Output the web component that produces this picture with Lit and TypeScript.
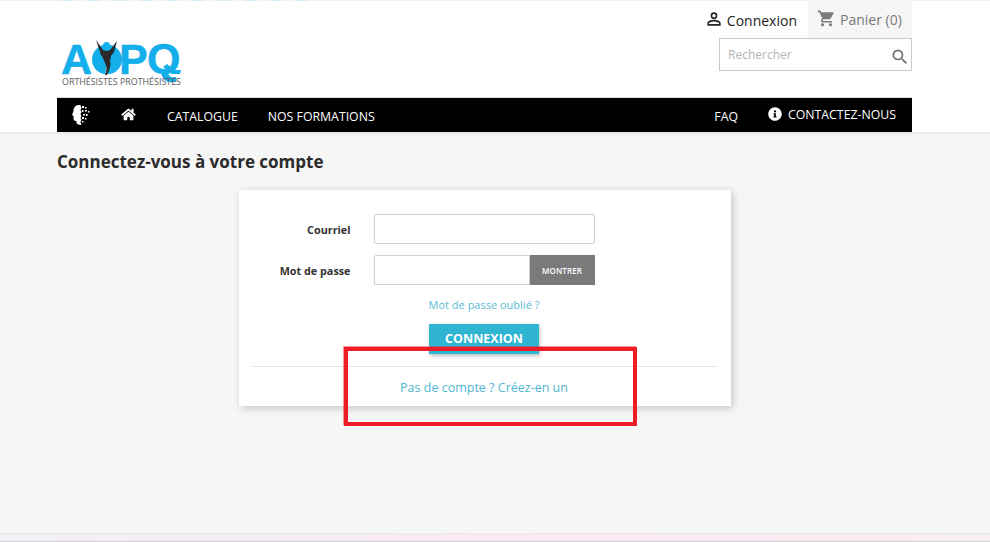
import { LitElement, html, css, svg } from "lit";
import { customElement } from "lit/decorators.js";

const personIcon = svg`<path d="M12 5.9a2.1 2.1 0 1 1 0 4.2 2.1 2.1 0 0 1 0-4.2m0 9c2.97 0 6.1 1.46 6.1 2.1v1.1H5.9V17c0-.64 3.13-2.1 6.1-2.1M12 4a4 4 0 1 0 0 8 4 4 0 0 0 0-8zm0 9c-2.67 0-8 1.34-8 4v3h16v-3c0-2.66-5.33-4-8-4z"/>`;
const cartIcon = svg`<path d="M7 18c-1.1 0-1.99.9-1.99 2S5.9 22 7 22s2-.9 2-2-.9-2-2-2zM1 2v2h2l3.6 7.59-1.35 2.45c-.16.28-.25.61-.25.96 0 1.1.9 2 2 2h12v-2H7.42c-.14 0-.25-.11-.25-.25l.03-.12.9-1.63h7.45c.75 0 1.41-.41 1.75-1.03l3.58-6.49A1 1 0 0 0 20 4H5.21l-.94-2H1zm16 16c-1.1 0-1.99.9-1.99 2s.89 2 1.99 2 2-.9 2-2-.9-2-2-2z"/>`;
const searchIcon = svg`<path d="M15.5 14h-.79l-.28-.27A6.47 6.47 0 0 0 16 9.5 6.5 6.5 0 1 0 9.5 16c1.61 0 3.09-.59 4.23-1.57l.27.28v.79l5 4.99L20.49 19l-4.99-5zm-6 0C7.01 14 5 11.99 5 9.5S7.01 5 9.5 5 14 7.01 14 9.5 11.99 14 9.5 14z"/>`;

@customElement("app-root")
export class AppRoot extends LitElement {
  static styles = css`
    :host {
      display: flex;
      flex-direction: column;
      height: 542px;
      overflow: hidden;
      position: relative;
      background: #f6f6f6;
      font-family: "Open Sans", "Noto Sans", sans-serif;
      color: #232323;
    }
    .header {
      background: #fff;
      height: 132px;
      flex: none;
      box-shadow: 0 1px 3px rgba(0, 0, 0, 0.1);
      position: relative;
    }
    .marks {
      height: 1px;
      background: repeating-linear-gradient(90deg, #d6ecf8 0 12px, #f4f4f4 12px 26px) 62px 0 / 250px 1px no-repeat, #f1f1f1;
    }
    .container {
      width: 855px;
      margin-left: 57px;
    }
    .top {
      display: flex;
      justify-content: space-between;
      height: 96px;
    }
    .logo {
      margin: 39px 0 0 5px;
      width: 120px;
      display: flex;
      flex-direction: column;
    }
    .logo-mark {
      display: block;
      width: 120px;
      height: 35px;
      overflow: visible;
    }
    .logo-letter {
      font-family: "Liberation Sans", Arial, sans-serif;
      font-weight: 700;
      font-size: 43px;
      fill: #14aeea;
      stroke: #14aeea;
      stroke-width: 0.5px;
    }
    .logo-sub {
      font-size: 8.9px;
      line-height: 11px;
      color: #5c5c5c;
      white-space: nowrap;
      margin-top: 1px;
    }
    .right {
      width: 205px;
      display: flex;
      flex-direction: column;
      align-items: flex-end;
    }
    .userbar {
      display: flex;
      height: 37px;
      justify-content: flex-end;
    }
    .login {
      display: flex;
      align-items: center;
      gap: 3px;
      font-size: 14px;
      color: #232323;
      padding: 2px 11px 0 0;
    }
    .login svg {
      width: 20px;
      height: 20px;
      fill: #232323;
      margin-top: -3px;
    }
    .cart {
      width: 104px;
      background: #f6f6f6;
      display: flex;
      align-items: center;
      gap: 4px;
      box-sizing: border-box;
      padding: 0 0 0 9px;
      font-size: 14px;
      color: #7a7a7a;
    }
    .cart svg {
      width: 19px;
      height: 19px;
      fill: #7a7a7a;
      margin-top: -3px;
    }
    .search {
      width: 193px;
      height: 33px;
      box-sizing: border-box;
      border: 1px solid #c9c9c9;
      display: flex;
      align-items: center;
      justify-content: space-between;
      padding: 0 1px 0 8px;
      background: #fff;
      font-size: 12px;
      color: #b5b5b5;
    }
    .search span {
      margin-top: -1px;
    }
    .search svg {
      width: 20px;
      height: 20px;
      fill: #6f6f6f;
      margin-top: 4px;
    }
    .nav {
      height: 35px;
      background: #000;
      border-top: 1px solid #dcdcdc;
      box-sizing: border-box;
      display: flex;
      align-items: center;
      color: #fff;
      font-size: 12.3px;
      padding: 0 16px 0 15px;
    }
    .nav svg {
      display: block;
      fill: #fff;
    }
    .face {
      width: 18px;
      height: 20px;
      margin-right: 31px;
    }
    .home {
      width: 15px;
      height: 13px;
      margin: -2px 31px 0 0;
    }
    .nav-item {
      margin-right: 30px;
      white-space: nowrap;
      padding-top: 2px;
    }
    .spacer {
      flex: 1;
    }
    .faq {
      margin-right: 30px;
    }
    .contact {
      display: flex;
      align-items: center;
      gap: 6px;
      white-space: nowrap;
      margin-top: -2px;
    }
    .info {
      width: 14px;
      height: 14px;
    }
    main {
      flex: 1;
      display: flex;
      flex-direction: column;
    }
    h1 {
      margin: 18px 0 16px;
      font-size: 17px;
      line-height: 24px;
      font-weight: 700;
      color: #2b2b2b;
    }
    .card {
      width: 492px;
      height: 216px;
      margin: 0 auto;
      box-sizing: border-box;
      background: #fff;
      box-shadow: 2px 2px 8px rgba(0, 0, 0, 0.2);
      padding: 24px 13px 0 12px;
      display: flex;
      flex-direction: column;
      align-items: stretch;
    }
    .row {
      display: flex;
      align-items: center;
      height: 30px;
      margin-bottom: 11px;
    }
    .row label {
      width: 100px;
      margin-right: 23px;
      text-align: right;
      font-size: 10.8px;
      font-weight: 700;
      color: #333;
    }
    .input {
      width: 221px;
      height: 30px;
      box-sizing: border-box;
      border: 1px solid #cfcfcf;
      border-radius: 2px;
      background: #fff;
    }
    .pwd {
      width: 156px;
      border-radius: 2px 0 0 2px;
    }
    .show {
      width: 65px;
      height: 30px;
      background: #7a7a7a;
      color: #fff;
      font-size: 8px;
      font-weight: 600;
      display: flex;
      align-items: center;
      justify-content: center;
      letter-spacing: 0.1px;
    }
    .forgot {
      text-align: center;
      font-size: 11px;
      line-height: 14px;
      color: #5bbcd6;
      margin: 2px 0 0;
    }
    .submit {
      align-self: center;
      width: 110px;
      height: 30px;
      box-sizing: border-box;
      padding: 0 0 2px 1px;
      margin: 12px 0 12px -1px;
      background: #2fb5d2;
      color: #fff;
      font-weight: 700;
      font-size: 12.5px;
      display: flex;
      align-items: center;
      justify-content: center;
      box-shadow: 1px 2px 4px rgba(0, 0, 0, 0.25);
      flex: none;
    }
    .divider {
      height: 1px;
      background: #e6e6e6;
      flex: none;
    }
    .create {
      text-align: center;
      font-size: 12.5px;
      line-height: 16px;
      color: #4fb6d3;
      margin: 13px 0 0;
    }
    .pagefoot {
      flex: none;
      height: 9px;
      border-top: 2px solid #eeeaee;
      box-sizing: border-box;
      background: linear-gradient(90deg, #f3f0f7, #f9e9f4 50%, #f9eef0);
      border-bottom: 1px solid #d2d0d4;
    }
    .annotation {
      position: absolute;
      left: 344px;
      top: 347px;
      width: 293px;
      height: 79px;
      box-sizing: border-box;
      border: 4px solid #ee1c25;
      box-shadow: -1px -1px 0 rgba(238, 28, 37, 0.45);
      pointer-events: none;
    }
  `;

  render() {
    return html`
      <header class="header">
        <div class="marks"></div>
        <div class="container">
          <div class="top">
            <div class="logo">
              <svg class="logo-mark" viewBox="0 0 120 35" aria-label="AOPQ">
                <text class="logo-letter" x="-1" y="34">A</text>
                <circle cx="45" cy="19.500" r="15" fill="#14aeea" />
                <g transform="translate(30 0)">
                  <path d="M15 24l1 11h-3z" fill="#fff" />
                  <path
                    d="M4 0l7 10c1 1 6 1 7 0l7-9-3 11-3 4-1 5c1 4 0 8-3 14l-2 0c2-5 2-9 0-12-1-3-2-5-4-8z"
                    fill="#2a2a2a"
                  />
                  <circle cx="14.500" cy="5.500" r="3.500" fill="#14aeea" />
                </g>
                <text class="logo-letter" x="57" y="34">P</text>
                <text class="logo-letter" x="85" y="33">Q</text>
                <path d="M105 24l7 6h7l-1 4h-8l-9-7z" fill="#14aeea" />
              </svg>
              <div class="logo-sub">ORTHÉSISTES PROTHÉSISTES</div>
            </div>
            <div class="right">
              <div class="userbar">
                <div class="login">
                  <svg viewBox="0 0 24 24" aria-hidden="true">${personIcon}</svg>
                  <span>Connexion</span>
                </div>
                <div class="cart">
                  <svg viewBox="0 0 24 24" aria-hidden="true">${cartIcon}</svg>
                  <span>Panier (0)</span>
                </div>
              </div>
              <div class="search">
                <span>Rechercher</span>
                <svg viewBox="0 0 24 24" aria-hidden="true">${searchIcon}</svg>
              </div>
            </div>
          </div>
          <nav class="nav">
            <svg class="face" viewBox="0 0 18 20" aria-hidden="true">
              <path d="M7 0C3.500 0 1.500 2.500 1.500 6L0 10l1.500 1v3c0 1.500 1.500 2 3 2v2c0 1 3 2 5 2l-1-3 1-2-1-2 1-2-1-2 1-2-1-2 1-2-1-2 1-2-1-2z" />
              <rect x="10" y="1" width="2" height="2" />
              <rect x="13" y="2" width="1.500" height="1.500" />
              <rect x="10" y="5" width="1.500" height="2" />
              <rect x="13" y="5" width="2" height="1.500" />
              <rect x="16" y="6" width="1.500" height="1.500" />
              <rect x="11" y="9" width="2" height="1.500" />
              <rect x="14" y="9" width="1.500" height="2" />
              <rect x="10" y="12" width="2" height="2" />
              <rect x="13" y="13" width="1.500" height="1.500" />
              <rect x="10" y="16" width="1.500" height="1.500" />
            </svg>
            <svg class="home" viewBox="0 0 576 512" aria-hidden="true">
              <path d="M280.400 148.300L96 300.100V464a16 16 0 0 0 16 16l112-.3a16 16 0 0 0 15.900-16V368a16 16 0 0 1 16-16h64a16 16 0 0 1 16 16v95.600a16 16 0 0 0 16 16.100L464 480a16 16 0 0 0 16-16V300L295.700 148.300a12.200 12.200 0 0 0-15.300 0zM571.600 251.500L488 182.600V44a12 12 0 0 0-12-12h-56a12 12 0 0 0-12 12v72.600L318.500 43a48 48 0 0 0-61 0L4.300 251.500a12 12 0 0 0-1.600 16.900l25.500 31A12 12 0 0 0 45.200 301l235.200-193.700a12.200 12.200 0 0 1 15.300 0L530.900 301a12 12 0 0 0 16.900-1.600l25.500-31a12 12 0 0 0-1.700-16.900z" />
            </svg>
            <span class="nav-item">CATALOGUE</span>
            <span class="nav-item">NOS FORMATIONS</span>
            <span class="spacer"></span>
            <span class="nav-item faq">FAQ</span>
            <span class="contact">
              <svg class="info" viewBox="0 0 512 512" aria-hidden="true">
                <path d="M256 8C119 8 8 119 8 256s111 248 248 248 248-111 248-248S393 8 256 8zm0 110a42 42 0 1 1 0 84 42 42 0 0 1 0-84zm56 254a12 12 0 0 1-12 12h-88a12 12 0 0 1-12-12v-24a12 12 0 0 1 12-12h12v-64h-12a12 12 0 0 1-12-12v-24a12 12 0 0 1 12-12h64a12 12 0 0 1 12 12v100h12a12 12 0 0 1 12 12z" />
              </svg>
              <span>CONTACTEZ-NOUS</span>
            </span>
          </nav>
        </div>
      </header>
      <main>
        <div class="container">
          <h1>Connectez-vous à votre compte</h1>
          <section class="card">
            <div class="row">
              <label>Courriel</label>
              <div class="input"></div>
            </div>
            <div class="row">
              <label>Mot de passe</label>
              <div class="input pwd"></div>
              <div class="show">MONTRER</div>
            </div>
            <div class="forgot">Mot de passe oublié ?</div>
            <div class="submit">CONNEXION</div>
            <div class="divider"></div>
            <div class="create">Pas de compte ? Créez-en un</div>
          </section>
        </div>
      </main>
      <div class="pagefoot"></div>
      <div class="annotation"></div>
    `;
  }
}
